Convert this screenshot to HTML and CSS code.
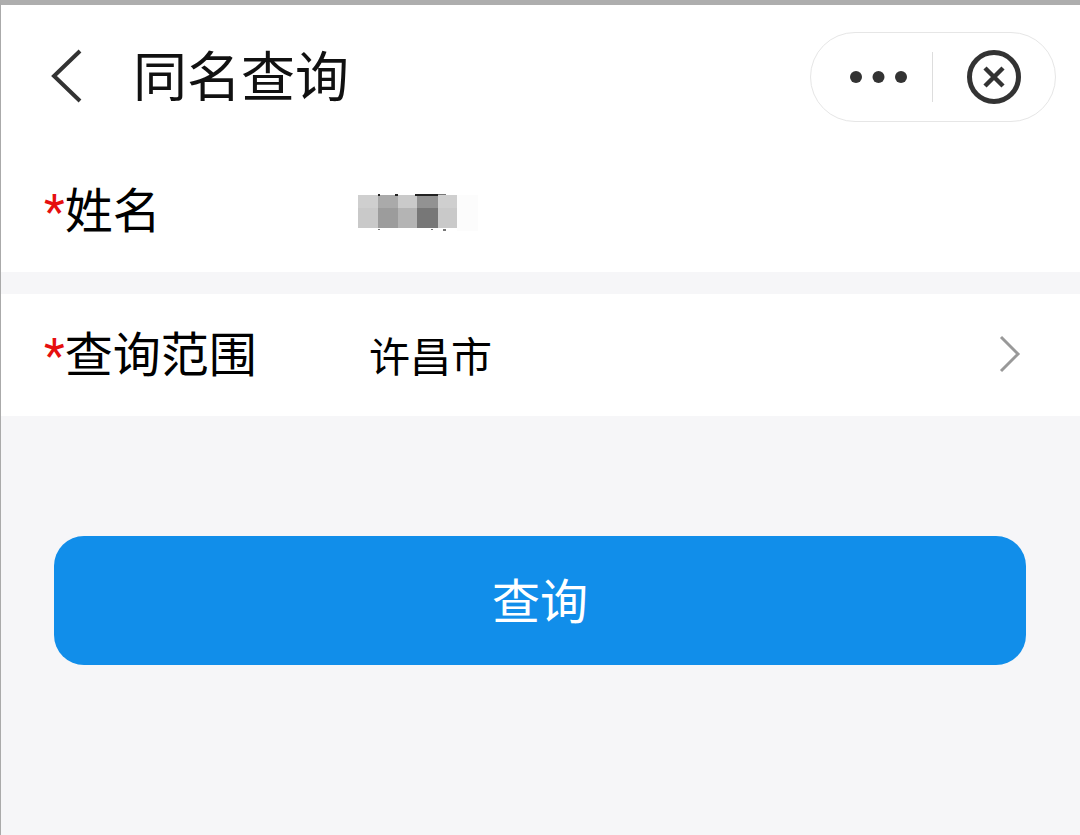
FILE: index.html
```html
<!DOCTYPE html>
<html lang="zh-CN">
<head>
    <meta charset="utf-8">
    <meta name="viewport" content="width=device-width, initial-scale=1">
    <title>同名查询</title>
    <link rel="stylesheet" href="styles.css">
</head>
<body>
    <header class="header">
        <button class="icon-button back" type="button" aria-label="返回">
            <svg width="34" height="56" viewBox="0 0 34 56" fill="none" stroke="#333" stroke-width="4">
                <path d="M32 2 L6 27 L32 52"/>
            </svg>
        </button>
        <h1>同名查询</h1>
        <div class="capsule">
            <button class="icon-button more" type="button" aria-label="更多">
                <svg width="58" height="12" viewBox="0 0 58 12" fill="#333">
                    <circle cx="6" cy="6" r="6"/>
                    <circle cx="28.5" cy="6" r="6"/>
                    <circle cx="51" cy="6" r="6"/>
                </svg>
            </button>
            <button class="icon-button close" type="button" aria-label="关闭">
                <svg width="54" height="54" viewBox="0 0 54 54" fill="none" stroke="#333">
                    <circle cx="27" cy="27" r="24.5" stroke-width="5"/>
                    <path d="M18 18 L36 36 M36 18 L18 36" stroke-width="4.5"/>
                </svg>
            </button>
        </div>
    </header>

    <form>
        <div class="row">
            <label for="name"><span class="required">*</span>姓名</label>
            <div class="field">
                <input type="text" id="name">
                <!-- masked name -->
                <svg class="mask" width="122" height="40" viewBox="0 0 122 40" shape-rendering="crispEdges">
                    <path fill="#fcfcfc" d="M99 3h21v36H99z"/>
                    <path fill="#cfcfcf" d="M0 3h20v13H0zM80 3h19v13H80z"/>
                    <path fill="#c9c9c9" d="M0 16h20v20H0zM80 16h19v20H80z"/>
                    <path fill="#aaa" d="M20 3h20v13H20z"/>
                    <path fill="#9c9c9c" d="M20 16h20v20H20z"/>
                    <path fill="#cacaca" d="M40 3h19v13H40z"/>
                    <path fill="#b4b4b4" d="M40 16h19v20H40z"/>
                    <path fill="#929292" d="M59 3h21v13H59z"/>
                    <path fill="#777" d="M59 16h21v20H59z"/>
                    <path fill="#222" d="M20 2h2v2h-2zM37 2h3v2h-3zM57 2h23v2H57z"/>
                    <path fill="#777" d="M80 2h8v1h-8zM20 37h2v1h-2zM73 37h2v1h-2zM85 37h3v2h-3z"/>
                </svg>
            </div>
        </div>
        <div class="row">
            <label for="range"><span class="required">*</span>查询范围</label>
            <div class="field">
                <select id="range">
                    <option>许昌市</option>
                </select>
            </div>
            <svg class="arrow" width="24" height="38" viewBox="0 0 24 38" fill="none" stroke="#999" stroke-width="3">
                <path d="M3 2 L20 19 L3 36"/>
            </svg>
        </div>
        <button class="submit" type="submit">查询</button>
    </form>
</body>
</html>
```

FILE: styles.css
```css
* {
    box-sizing: border-box;
}

body {
    min-height: 100vh;
    margin: 0;
    border-top: 5px solid #aeaeae;
    border-left: 1px solid #aaa;
    background-color: #f6f6f8;
    color: #000;
    font-family: "Noto Sans CJK SC", sans-serif;
}

button,
input,
select {
    margin: 0;
    padding: 0;
    border: none;
    background: none;
    color: inherit;
    font-family: inherit;
}

button {
    cursor: pointer;
}

svg {
    display: block;
}

.header {
    display: flex;
    align-items: center;
    height: 145px;
    padding: 0 24px 2px 47px;
    background-color: #fff;
}

.header h1 {
    flex: 1;
    margin: 0 0 0 51px;
    padding-bottom: 6px;
    color: #111;
    font-size: 54px;
    font-weight: 400;
    line-height: 80px;
}

.capsule {
    display: flex;
    align-items: center;
    width: 246px;
    height: 90px;
    border: 1px solid #e6e6e6;
    border-radius: 45px;
}

.icon-button {
    display: flex;
    align-items: center;
    justify-content: center;
}

.more,
.close {
    width: 50%;
    height: 50px;
}

.more {
    padding-left: 14px;
    border-right: 1px solid #ddd;
}

.row {
    display: flex;
    align-items: center;
    height: 122px;
    padding: 0 58px 2px 43px;
    background-color: #fff;
}

.row + .row {
    margin-top: 22px;
}

.row label {
    width: 314px;
    padding-bottom: 2px;
    font-size: 48px;
    line-height: 72px;
}

.required {
    color: #e60f0f;
    font-family: Roboto, sans-serif;
}

.field {
    position: relative;
    flex: 1;
    padding-left: 11px;
}

.field input,
.field select {
    display: block;
    width: 100%;
    height: 60px;
    font-size: 41px;
    line-height: 60px;
    outline: none;
    appearance: none;
}

/* lies over the text of the input */
.mask {
    position: absolute;
    top: 12px;
    left: 0;
}

.submit {
    display: block;
    width: calc(100% - 107px);
    height: 129px;
    margin: 120px 54px 0 53px;
    padding-bottom: 6px;
    border-radius: 30px;
    background-color: #118eea;
    color: #fff;
    font-size: 48px;
}
```
